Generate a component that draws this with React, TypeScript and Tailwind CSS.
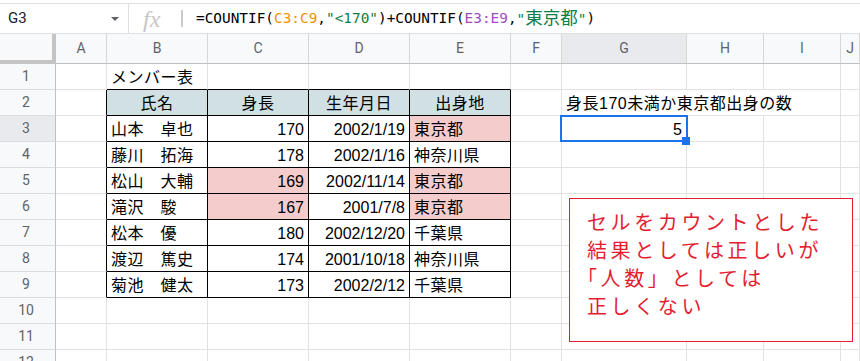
import clsx from 'clsx';

type Align = 'left' | 'center' | 'right';

interface Cell {
  text: string;
  align?: Align;
  bg?: string;
}

const COLS = ['A', 'B', 'C', 'D', 'E', 'F', 'G', 'H', 'I', 'J'];
const ROWS = [1, 2, 3, 4, 5, 6, 7, 8, 9, 10, 11, 12];

const HEAD_BG = 'bg-[#d0e0e3]';
const PINK_BG = 'bg-[#f4cccc]';

const members: [string, number, string, string][] = [
  ['山本　卓也', 170, '2002/1/19', '東京都'],
  ['藤川　拓海', 178, '2002/1/16', '神奈川県'],
  ['松山　大輔', 169, '2002/11/14', '東京都'],
  ['滝沢　駿', 167, '2001/7/8', '東京都'],
  ['松本　優', 180, '2002/12/20', '千葉県'],
  ['渡辺　篤史', 174, '2001/10/18', '神奈川県'],
  ['菊池　健太', 173, '2002/2/12', '千葉県'],
];

// シートの中身（行 → 列 → セル）
const sheet: Record<number, Record<string, Cell>> = {
  1: { B: { text: 'メンバー表' } },
  2: {
    B: { text: '氏名', align: 'center', bg: HEAD_BG },
    C: { text: '身長', align: 'center', bg: HEAD_BG },
    D: { text: '生年月日', align: 'center', bg: HEAD_BG },
    E: { text: '出身地', align: 'center', bg: HEAD_BG },
    G: { text: '身長170未満か東京都出身の数' },
  },
};

members.forEach(([name, height, birth, pref], i) => {
  sheet[i + 3] = {
    B: { text: name },
    C: { text: String(height), align: 'right', bg: height < 170 ? PINK_BG : undefined },
    D: { text: birth, align: 'right' },
    E: { text: pref, bg: pref === '東京都' ? PINK_BG : undefined },
  };
});
sheet[3].G = { text: '5', align: 'right' };

const inTable = (row: number, col: string) => row >= 2 && row <= 9 && 'BCDE'.includes(col);

function SheetCell({ row, col }: { row: number; col: string }) {
  const cell = sheet[row]?.[col];
  const table = inTable(row, col);
  const blackRight = table || (col === 'A' && row >= 2 && row <= 9);
  const blackBottom = table || (row === 1 && 'BCDE'.includes(col));
  const overflowed = row === 2 && (col === 'G' || col === 'H');
  const selected = row === 3 && col === 'G';

  return (
    <div
      className={clsx(
        'relative flex items-end whitespace-nowrap px-[4px] pb-[2px] text-[16px] leading-[18px] text-black',
        blackRight
          ? 'border-r border-r-black'
          : overflowed
            ? ''
            : 'border-r border-r-[#e2e2e2]',
        blackBottom ? 'border-b border-b-black' : 'border-b border-b-[#e2e2e2]',
        cell?.align === 'center' && 'justify-center',
        cell?.align === 'right' && 'justify-end',
        cell?.align !== 'right' && 'tracking-[0.5px]',
        cell?.bg,
      )}
    >
      {cell?.text}
      {selected && (
        <>
          <div className="absolute -left-[2px] -right-[2px] -top-[1px] -bottom-[1px] z-10 border-2 border-[#1a73e8]" />
          <div className="absolute left-[120px] top-[21px] z-10 h-[8px] w-[8px] bg-[#1a73e8]" />
        </>
      )}
    </div>
  );
}

function FormulaBar() {
  return (
    <div className="bg-white pt-[3px]">
      <div className="flex h-[31px] border-y border-[#e0e0e0]">
        <div className="flex w-[129px] items-center justify-between border-r border-r-[#e0e0e0] pl-[8px] pr-[9px] font-['Roboto'] text-[15px] text-[#202124]">
          G3
          <svg width="8" height="4" viewBox="0 0 8 4">
            <path d="M0 0 L8 0 L4 4 Z" fill="#5f6368" />
          </svg>
        </div>
        <div className="flex w-[52px] items-center pl-[14px]">
          <span className="font-['Liberation_Serif'] text-[24px] italic leading-none text-[#c6c6c6]">fx</span>
        </div>
        <div className="h-[17px] w-[2px] self-center bg-[#c9cbcd]" />
        <div className="ml-[13px] flex items-center font-['DejaVu_Sans_Mono','Noto_Sans_CJK_JP',monospace] text-[14.4px] text-black">
          =COUNTIF(<span className="text-[#f09300]">C3:C9</span>,
          <span className="text-[#0b8043]">"&lt;170"</span>)+COUNTIF(
          <span className="text-[#9c4dbf]">E3:E9</span>,
          <span className="text-[#0b8043]">
            "<span className="text-[17.5px]">東京都</span>"
          </span>
          )
        </div>
      </div>
    </div>
  );
}

export default function App() {
  return (
    <div className="relative h-[361px] w-[860px] overflow-hidden bg-white font-['Liberation_Sans','Noto_Sans_CJK_JP',sans-serif]">
      <FormulaBar />

      <div className="grid grid-cols-[56px_51px_101px_101px_101px_101px_51px_125px_77px_77px_1fr] grid-rows-[30px_repeat(12,26px)]">
        {/* 列ヘッダー */}
        <div className="border-b-4 border-r-4 border-[#c4c4c4] bg-[#f8f9fa]" />
        {COLS.map((c) => (
          <div
            key={c}
            className={clsx(
              "flex items-center justify-center border-b border-r border-b-[#c0c0c0] border-r-[#d6d6d6] font-['Roboto'] text-[14px] text-[#5f6368]",
              c === 'G' ? 'bg-[#e8eaed]' : 'bg-[#f8f9fa]',
            )}
          >
            {c}
          </div>
        ))}

        {ROWS.map((r) => (
          <div key={r} className="contents">
            <div
              className={clsx(
                "flex items-center justify-center border-b border-r border-b-[#dadce0] border-r-[#c0c0c0] pr-[3px] font-['Roboto'] text-[14px] text-[#5f6368]",
                r === 3 ? 'bg-[#e8eaed]' : 'bg-[#f8f9fa]',
              )}
            >
              {r}
            </div>
            {COLS.map((c) => (
              <SheetCell key={c} row={r} col={c} />
            ))}
          </div>
        ))}
      </div>

      {/* テキストボックス */}
      <div className="absolute left-[569px] top-[198px] z-20 h-[144px] w-[284px] border border-[#e02030] bg-white pl-[17px] pt-[9px] font-['Noto_Sans_CJK_JP',sans-serif] text-[20px] leading-[28px] tracking-[3.6px] text-[#e31e30]">
        <div>セルをカウントとした</div>
        <div>結果としては正しいが</div>
        <div className="-ml-[10px]">「人数」としては</div>
        <div>正しくない</div>
      </div>
    </div>
  );
}
